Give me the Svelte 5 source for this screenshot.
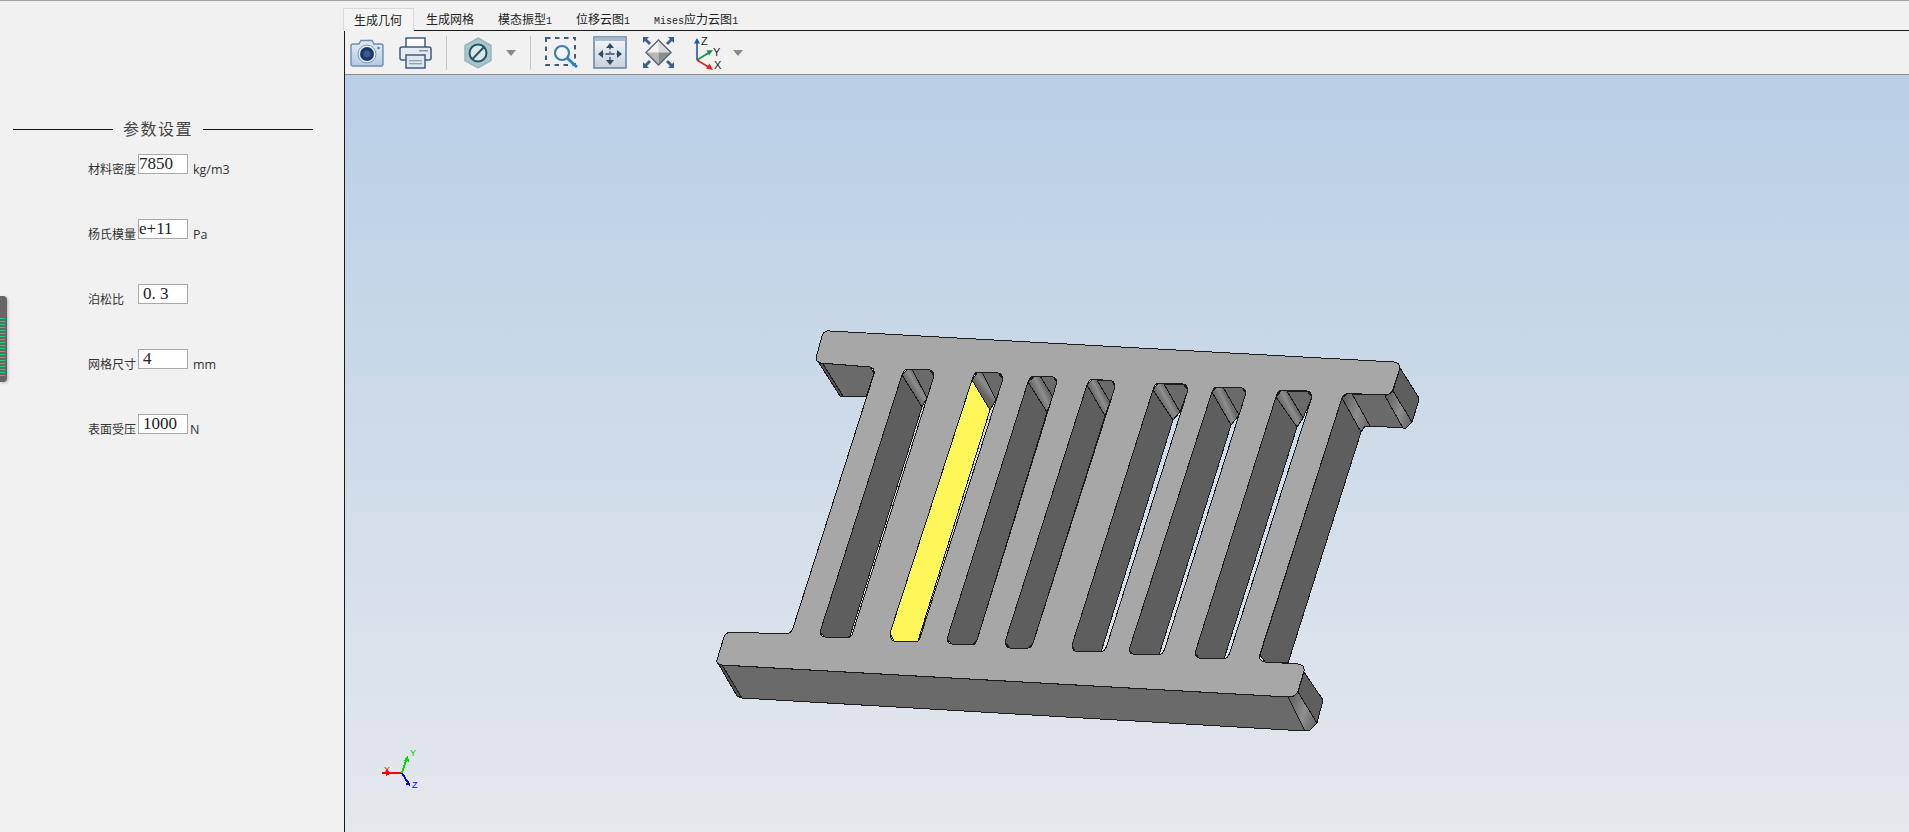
<script>
	const rows = [
		{ label: '材料密度', value: '7850', unit: 'kg/m3' },
		{ label: '杨氏模量', value: 'e+11', unit: 'Pa' },
		{ label: '泊松比', value: '0. 3', unit: '', indent: true },
		{ label: '网格尺寸', value: '4', unit: 'mm', indent: true },
		{ label: '表面受压', value: '1000', unit: 'N', indent: true, tight: true }
	];

	// page coordinates of each slot in the plate, top corners then bottom corners
	const slots = [
		{ a: [902, 375], b: [908, 369], t1: [912, 369], t2: [927, 398], c: [930, 370], d: [934, 376], p: [922, 407], w: [850, 636], e: [852, 635], f: [847, 638], g: [825, 637], h: [820, 632] },
		{ a: [972, 380], b: [978, 372], t1: [982, 372], t2: [996, 400], c: [998, 373], d: [1003, 379], p: [990, 410], w: [918, 641], e: [920, 638], f: [915, 642], g: [894, 641], h: [890, 633], lit: true },
		{ a: [1028, 382], b: [1035, 376], t1: [1040, 376], t2: [1053, 397], c: [1053, 377], d: [1057, 382], p: [1047, 412], w: [977, 640], e: [977, 640], f: [972, 645], g: [952, 644], h: [947, 639] },
		{ a: [1087, 385], b: [1093, 379], t1: [1097, 380], t2: [1110, 402], c: [1112, 381], d: [1115, 387], p: [1105, 416], w: [1033, 643], e: [1033, 643], f: [1028, 648], g: [1010, 648], h: [1005, 642] },
		{ a: [1153, 390], b: [1158, 383], t1: [1164, 384], t2: [1180, 412], c: [1183, 384], d: [1188, 390], p: [1173, 420], w: [1101, 652], e: [1107, 645], f: [1100, 652], g: [1075, 651], h: [1072, 645] },
		{ a: [1212, 392], b: [1217, 387], t1: [1223, 387], t2: [1239, 415], c: [1242, 388], d: [1246, 393], p: [1231, 425], w: [1159, 655], e: [1165, 648], f: [1158, 655], g: [1133, 654], h: [1129, 650] },
		{ a: [1276, 397], b: [1282, 390], t1: [1287, 391], t2: [1303, 418], c: [1307, 391], d: [1312, 397], p: [1297, 427], w: [1224, 659], e: [1230, 652], f: [1223, 659], g: [1199, 658], h: [1195, 653] }
	];

	const pts = (...list) => list.map((q) => q.join(',')).join(' ');

	function hole(s) {
		return (
			`M${s.a} Q${s.a[0] + 2},${s.b[1]} ${s.b} L${s.c} Q${s.d[0] - 1},${s.c[1]} ${s.d} ` +
			`L${s.e} Q${s.e[0] - 2},${s.f[1]} ${s.f} L${s.g} Q${s.h[0] + 1},${s.g[1]} ${s.h} Z`
		);
	}

	const outline =
		'M816 358 L822 336 Q824 330 830 331 L1394 362 Q1399 362 1400 368 L1393 389 Q1391 395 1385 395 ' +
		'L1351 393.5 Q1344 393 1342 398 L1260 654 Q1258 661 1265 662 L1298 664 Q1305 665 1304 671 ' +
		'L1298 691 Q1296 697 1289 697 L722 665 Q716 664 717 660 L724 637 Q726 632 732 632 L785 634 ' +
		'Q791 634 793 628 L874 374 Q875 368 870 367 L821 363 Q816 362 816 358 Z ';

	const plate = outline + slots.map(hole).join(' ');
</script>

<div class="app">
	<aside class="panel">
		<div class="gauge"><div class="ticks"></div></div>
		<div class="title">
			<span class="rule short"></span>
			<span class="title-text">参数设置</span>
			<span class="rule"></span>
		</div>
		<div class="form">
			{#each rows as row}
				<div class="row">
					<span class="label">{row.label}</span>
					<input class="field" class:indent={row.indent} value={row.value} />
					{#if row.unit}
						<span class="unit" class:tight={row.tight}>{row.unit}</span>
					{/if}
				</div>
			{/each}
		</div>
	</aside>

	<main class="main">
		<nav class="tabs">
			<div class="tab active">生成几何</div>
			<div class="tab">生成网格</div>
			<div class="tab">模态振型<span class="latin">1</span></div>
			<div class="tab">位移云图<span class="latin">1</span></div>
			<div class="tab"><span class="latin">Mises</span>应力云图<span class="latin">1</span></div>
		</nav>

		<div class="stage">
			<div class="toolbar">
				<!-- camera -->
				<svg class="camera" width="34" height="28" viewBox="0 0 34 28">
					<defs>
						<linearGradient id="cam" x1="0" y1="0" x2="0" y2="1">
							<stop offset="0" stop-color="#e4ecf6" />
							<stop offset="1" stop-color="#b4cae4" />
						</linearGradient>
					</defs>
					<path d="M9 5 L11 1.5 H22 L24 5 H31 Q33 5 33 7 V25 Q33 27 31 27 H3 Q1 27 1 25 V7 Q1 5 3 5 Z" fill="url(#cam)" stroke="#6f8bb0" stroke-width="1.4" />
					<circle cx="17" cy="15" r="9" fill="#e8eef6" stroke="#7d97b8" />
					<circle cx="17" cy="15" r="7" fill="#1e3768" />
					<circle cx="17" cy="15" r="3.5" fill="#3b5a94" />
					<circle cx="28.5" cy="9" r="1.2" fill="#5b7396" />
				</svg>
				<!-- printer -->
				<svg class="printer" width="33" height="32" viewBox="0 0 33 32">
					<rect x="7" y="1" width="19" height="10" fill="#fff" stroke="#3f5b82" stroke-width="1.5" />
					<rect x="1" y="10" width="31" height="13" rx="2" fill="#e6ebf2" stroke="#3f5b82" stroke-width="1.5" />
					<rect x="20" y="13" width="9" height="1.5" fill="#8195b0" />
					<rect x="7" y="18" width="19" height="13" fill="#dfe6ef" stroke="#3f5b82" stroke-width="1.5" />
					<rect x="10" y="23" width="13" height="1.3" fill="#8ea2bb" />
					<rect x="10" y="26" width="13" height="1.3" fill="#8ea2bb" />
				</svg>
				<span class="sep first"></span>
				<!-- display mode -->
				<svg class="hex" width="28" height="32" viewBox="0 0 28 32">
					<path d="M14 1 L27 8.5 V23.5 L14 31 L1 23.5 V8.5 Z" fill="#adc5ca" stroke="#97b6b8" stroke-width="1.5" />
					<circle cx="14" cy="16" r="8.5" fill="#dfe6e8" stroke="#1f5a68" stroke-width="2" />
					<path d="M8.5 22 L20 10" stroke="#1f5a68" stroke-width="2" />
				</svg>
				<span class="drop hexdrop"></span>
				<span class="sep"></span>
				<!-- zoom window -->
				<svg class="zoomwin" width="33" height="31" viewBox="0 0 33 31">
					<rect x="1" y="1" width="29" height="27" fill="none" stroke="#3f5b82" stroke-width="2" stroke-dasharray="4.5 4.5" />
					<circle cx="17" cy="16" r="7" fill="#f3f7fb" stroke="#3c7fb5" stroke-width="2.2" />
					<path d="M22 21 L32 30" stroke="#2b86cf" stroke-width="3" />
				</svg>
				<!-- pan -->
				<svg class="pan" width="34" height="33" viewBox="0 0 34 33">
					<defs>
						<linearGradient id="panbg" x1="0" y1="0" x2="0" y2="1">
							<stop offset="0" stop-color="#f6f7f9" />
							<stop offset="1" stop-color="#c9d1dc" />
						</linearGradient>
					</defs>
					<rect x="1" y="1" width="32" height="31" fill="url(#panbg)" stroke="#6d87a8" stroke-width="1.6" />
					<rect x="1.5" y="1.5" width="31" height="3.5" fill="#aabbd0" />
					<path d="M17 10 V27 M7 18 H27" stroke="#2d4a70" stroke-width="1.4" stroke-dasharray="3.5 2" />
					<path d="M17 7 L21 12 H13 Z M17 29 L21 24 H13 Z M5 18 L10 14 V22 Z M29 18 L24 14 V22 Z" fill="#2d4a70" />
				</svg>
				<!-- fit all -->
				<svg class="fit" width="33" height="33" viewBox="0 0 33 33">
					<path d="M16.5 4 L16.5 16.5 L4 16.5 Z" fill="#f4f4f4" />
					<path d="M16.5 4 L29 16.5 L16.5 16.5 Z" fill="#d8d8d8" />
					<path d="M4 16.5 L16.5 16.5 L16.5 29 Z" fill="#b6b6b6" />
					<path d="M29 16.5 L16.5 16.5 L16.5 29 Z" fill="#8e8e8e" />
					<path d="M16.5 4 L29 16.5 L16.5 29 L4 16.5 Z" fill="none" stroke="#5b6675" stroke-width="1.4" />
					<path d="M1 1 H7 L5 3 L9 7 L7 9 L3 5 L1 7 Z M32 1 V7 L30 5 L26 9 L24 7 L28 3 L26 1 Z M1 32 V26 L3 28 L7 24 L9 26 L5 30 L7 32 Z M32 32 H26 L28 30 L24 26 L26 24 L30 28 L32 26 Z" fill="#3a5f8f" />
				</svg>
				<!-- view orientation -->
				<svg class="axes" width="30" height="36" viewBox="0 0 30 36">
					<path d="M4 25 V6" stroke="#1f57b0" stroke-width="1.6" />
					<path d="M4 3 L7 8.5 H1 Z" fill="#1f57b0" />
					<path d="M4 25 L17 17" stroke="#14934a" stroke-width="1.6" />
					<path d="M20 15 L16 20.5 L13.5 15.5 Z" fill="#14934a" />
					<path d="M4 25 L17 33" stroke="#e02424" stroke-width="1.6" />
					<path d="M20 35 L13 33.5 L16.5 28.5 Z" fill="#e02424" />
					<text x="8" y="10" class="axis-letter">Z</text>
					<text x="20" y="21" class="axis-letter">Y</text>
					<text x="21" y="34" class="axis-letter">X</text>
				</svg>
				<span class="drop axesdrop"></span>
			</div>

			<div class="viewport">
				<svg class="scene" width="1564" height="757" viewBox="345 75 1564 757">
					<defs>
						<linearGradient id="band" x1="0" y1="0.3" x2="1" y2="0.7">
							<stop offset="0" stop-color="#606060" />
							<stop offset="0.55" stop-color="#8f8f8f" />
							<stop offset="1" stop-color="#666666" />
						</linearGradient>
						{#each slots as s, i}
							<linearGradient id="slot{i}" gradientUnits="userSpaceOnUse" x1={s.a[0]} y1={s.a[1]} x2={s.t1[0]} y2={s.t1[1]}>
								<stop offset="0" stop-color="#626262" />
								<stop offset="0.6" stop-color="#8e8e8e" />
								<stop offset="1" stop-color="#686868" />
							</linearGradient>
						{/each}
					</defs>

					<!-- upper left notch -->
					<polygon class="edge side" points="819,363 870,367 874,373 866,397 840,396" />
					<polygon class="edge dark" points="819,363 823,364 843,396 840,396" />

					<!-- upper right notch -->
					<polygon class="edge wall" points="1342,398 1361,432 1288,663 1265,662 1260,655" />
					<polygon class="edge" fill="url(#band)" points="1342,398 1348,393 1352,394 1370,426 1365,426 1361,432" />
					<polygon class="edge side" points="1352,394 1385,395 1403,428 1370,426" />
					<polygon class="edge" fill="url(#band)" points="1385,396 1393,391 1412,422 1406,428 1403,428" />
					<polygon class="edge wall" points="1393,391 1400,368 1419,398 1418,403 1412,422" />

					<!-- lower plate faces -->
					<polygon class="edge side" points="720,665 1288,697 1310,730 1305,731 742,698 737,696" />
					<polygon class="edge dark" points="718,663 722,665 742,698 737,696" />
					<polygon class="edge" fill="url(#band)" points="1288,697 1298,692 1317,723 1310,730 1305,731" />
					<polygon class="edge wall" points="1298,692 1304,672 1323,700 1317,723" />

					<!-- slot walls -->
					{#each slots as s, i}
						<polygon class="edge" class:wall={!s.lit} class:yellow={s.lit} points={pts(s.a, s.p, s.w, s.f, s.g, s.h)} />
						<polygon class="edge side" points={pts(s.t1, s.c, s.d, s.t2)} />
						<polygon class="edge" fill="url(#slot{i})" points={pts(s.a, s.b, s.t1, s.t2, s.p)} />
					{/each}

					<path class="edge top" fill-rule="evenodd" d={plate} />

					<!-- corner triad -->
					<g class="triad">
						<path d="M402 773 H382" stroke="#ff0000" stroke-width="2" />
						<path d="M392 773 L386 770 V776 Z" fill="#ff0000" />
						<path d="M402 773 L407 757" stroke="#00dc00" stroke-width="2" />
						<path d="M408 755 L409 762 L404.5 760.5 Z" fill="#00dc00" />
						<path d="M402 773 L408 783" stroke="#0000ff" stroke-width="2" />
						<path d="M410 786 L405 784 L409 780.5 Z" fill="#0000ff" />
						<text x="384" y="773" class="t-x">X</text>
						<text x="410" y="756" class="t-y">Y</text>
						<text x="412" y="788" class="t-z">Z</text>
					</g>
				</svg>
			</div>
		</div>
	</main>
</div>

<style>
	:global(body) {
		margin: 0;
		background: #f1f1f1;
		overflow: hidden;
	}

	.app {
		display: flex;
		height: 832px;
		box-sizing: border-box;
		border-top: 1px solid #a3a3a3;
		font-family: 'Noto Sans CJK SC', sans-serif;
		color: #333;
		background: #f1f1f1;
	}

	.panel {
		position: relative;
		width: 344px;
		flex: none;
		box-sizing: border-box;
		padding: 118px 0 0 13px;
	}

	.gauge {
		position: absolute;
		left: 0;
		top: 295px;
		width: 7px;
		height: 86px;
		background: #666;
		border-radius: 0 4px 4px 0;
		box-shadow: 1px 1px 3px rgba(0, 0, 0, 0.25);
	}

	.ticks {
		margin-top: 22px;
		width: 5px;
		height: 60px;
		background: repeating-linear-gradient(to bottom, #18d860 0 1px, #666 1px 3px, #6fa585 3px 4px, #666 4px 6px);
	}

	.title {
		display: flex;
		align-items: center;
		width: 300px;
		height: 20px;
		gap: 10px;
	}

	.rule {
		flex: 1;
		height: 1px;
		background: #111;
	}

	.rule.short {
		flex: none;
		width: 100px;
	}

	.title-text {
		font-size: 16px;
		letter-spacing: 1.5px;
		line-height: 18px;
		margin-bottom: 2px;
		color: #444;
	}

	.form {
		margin: 15px 0 0 75px;
	}

	.row {
		display: flex;
		align-items: flex-start;
		height: 65px;
	}

	.label {
		width: 50px;
		flex: none;
		margin-top: 8px;
		font-size: 12px;
		line-height: 13px;
	}

	.field {
		width: 50px;
		height: 20px;
		flex: none;
		box-sizing: border-box;
		border: 1px solid #a9a9a9;
		background: #fff;
		padding: 0;
		font: 17px/17px 'Liberation Serif', serif;
		color: #222;
		outline: none;
	}

	.field.indent {
		padding-left: 4px;
	}

	.unit {
		margin: 8px 0 0 5px;
		font: 12.5px/15px 'Open Sans', sans-serif;
	}

	.unit.tight {
		margin-left: 2px;
	}

	.main {
		flex: 1;
		display: flex;
		flex-direction: column;
		min-width: 0;
	}

	.tabs {
		display: flex;
		align-items: flex-end;
		height: 29px;
		flex: none;
		margin-left: -1px;
		font-size: 12px;
	}

	.tab {
		height: 22px;
		padding: 0 12px;
		line-height: 22px;
		color: #222;
	}

	.tab.active {
		height: 23px;
		margin-bottom: -1px;
		box-sizing: border-box;
		border: 1px solid #d9d9d9;
		border-bottom: none;
		padding: 0 11px 0 10px;
		background: #f4f4f4;
		z-index: 1;
	}

	.latin {
		font: 10px 'Liberation Mono', monospace;
	}

	.stage {
		flex: 1;
		display: flex;
		flex-direction: column;
		border-top: 1px solid #1a1a1a;
		border-left: 1px solid #1a1a1a;
		min-height: 0;
	}

	.toolbar {
		display: flex;
		align-items: center;
		height: 43px;
		flex: none;
		border-bottom: 1px solid #8c8c8c;
		background: #f1f1f1;
		padding-left: 5px;
	}

	.toolbar svg {
		flex: none;
		display: block;
	}

	.printer {
		margin-left: 15px;
	}

	.sep {
		width: 1px;
		height: 34px;
		margin: 0 0 0 14px;
		background: #c8c8c8;
	}

	.hex {
		margin-left: 17px;
	}

	.drop {
		width: 0;
		height: 0;
		border-left: 5px solid transparent;
		border-right: 5px solid transparent;
		border-top: 6px solid #8a8a8a;
	}

	.hexdrop {
		margin-left: 14px;
	}

	.hexdrop + .sep {
		margin-left: 14px;
	}

	.zoomwin {
		margin-left: 14px;
	}

	.pan {
		margin-left: 15px;
	}

	.fit {
		margin-left: 15px;
	}

	.axes {
		margin-left: 18px;
	}

	.axesdrop {
		margin-left: 10px;
	}

	.axis-letter {
		font: 11px 'Liberation Sans', sans-serif;
		fill: #222;
	}

	.viewport {
		flex: 1;
		min-height: 0;
		background: linear-gradient(to bottom, #b9cfe6, #e5e8ed);
	}

	.scene {
		display: block;
		shape-rendering: crispEdges;
	}

	.edge {
		stroke: #1c1c1c;
		stroke-width: 1;
		stroke-linejoin: round;
	}

	.top {
		fill: #a7a7a7;
	}

	.wall {
		fill: #5e5e5e;
	}

	.side {
		fill: #6a6a6a;
	}

	.dark {
		fill: #525252;
	}

	.yellow {
		fill: #fff75a;
	}

	.triad text {
		font: 9px 'Liberation Sans', sans-serif;
	}

	.t-x {
		fill: #ff0000;
	}

	.t-y {
		fill: #00c800;
	}

	.t-z {
		fill: #0000ff;
	}
</style>
